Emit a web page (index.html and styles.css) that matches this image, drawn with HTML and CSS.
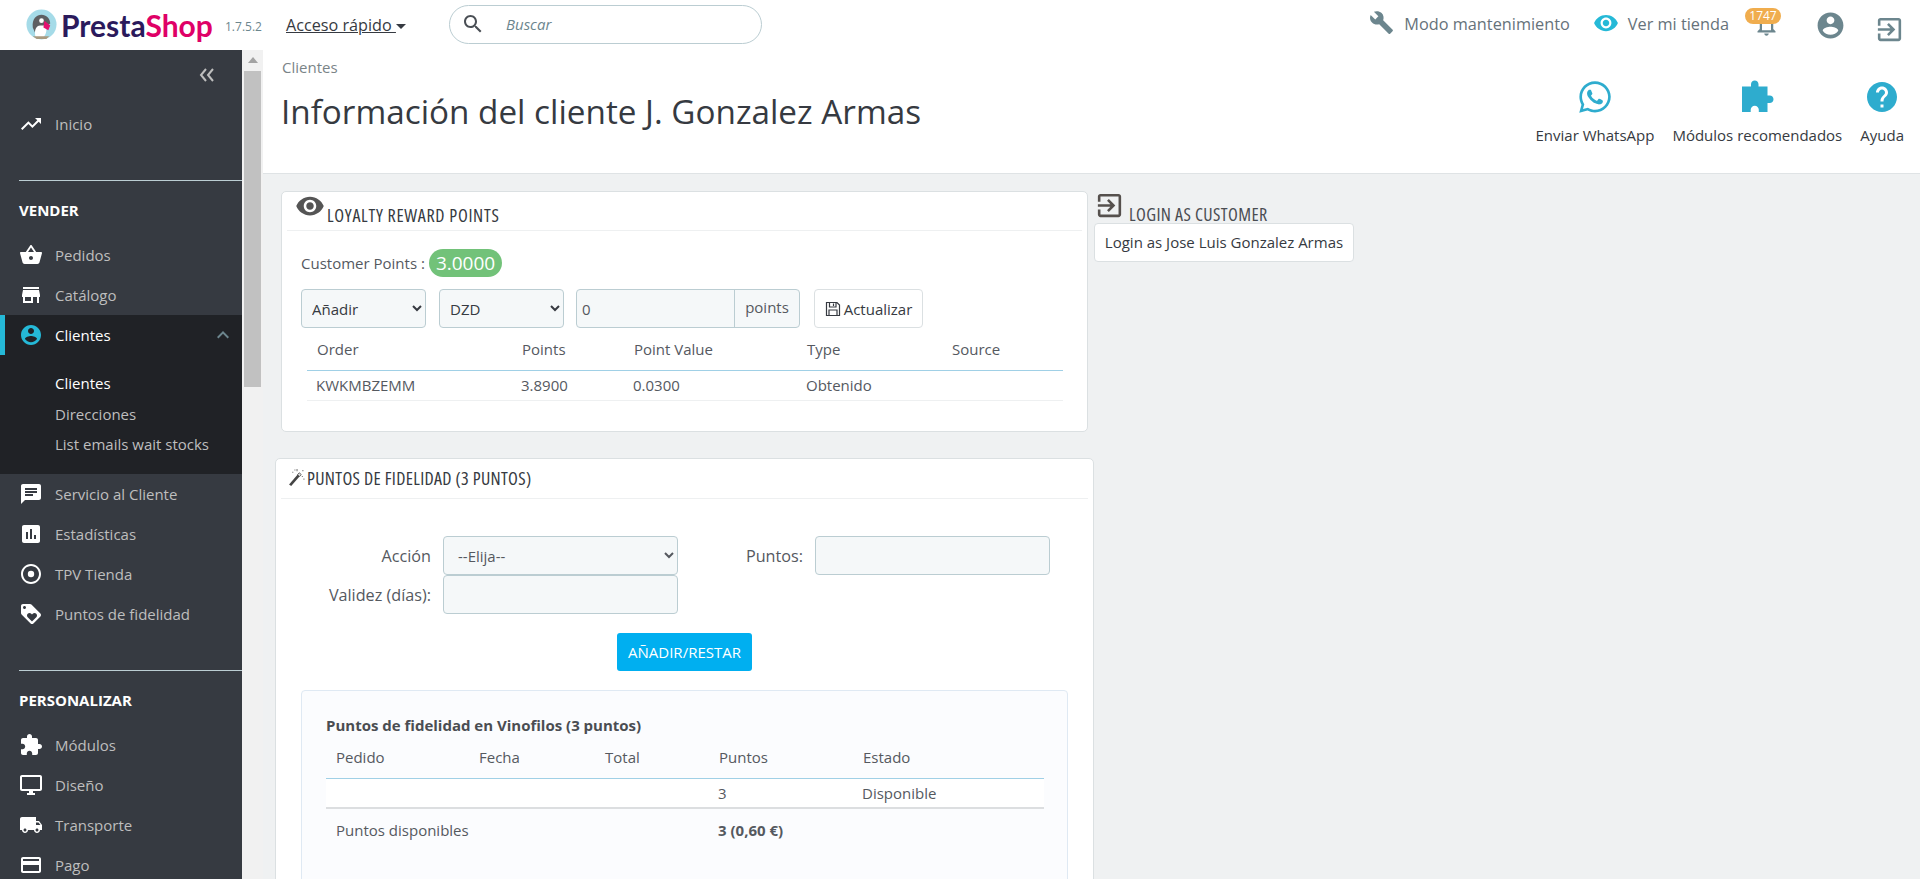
FILE: index.html
```html
<!DOCTYPE html>
<html lang="es">
<head>
<meta charset="utf-8">
<title>Información del cliente</title>
<link rel="stylesheet" href="styles.css">
</head>
<body>
<header class="topbar">
  <div class="logo">
    <svg class="logo-mark" viewBox="0 0 32 32"><circle cx="16" cy="16" r="15.5" fill="#a5dbe8"/><path d="M7 19C6 10 11 6 16 6s9 4 9 9l-3 2-3 9H10z" fill="#5d5f62"/><path d="M10 29c-2-6 0-13 6-12l4 0c2 4 1 9-2 12z" fill="#fff"/><path d="M19 12l6 5-2 5-5-3z" fill="#e5106f"/><circle cx="16" cy="12" r="2.4" fill="#fff"/><path d="M7 28h17l-3 3H11z" fill="#a89a80"/></svg>
    <span class="logo-text"><span class="logo-a">Presta</span><span class="logo-b">Shop</span></span>
  </div>
  <span class="version">1.7.5.2</span>
  <a class="quick">Acceso rápido <span class="caret"></span></a>
  <div class="search">
    <svg class="ico-search" viewBox="0 0 24 24"><path d="M15.5 14h-.79l-.28-.27C15.41 12.59 16 11.11 16 9.5 16 5.91 13.09 3 9.5 3S3 5.91 3 9.5 5.91 16 9.5 16c1.61 0 3.09-.59 4.23-1.57l.27.28v.79l5 4.99L20.49 19l-4.99-5zm-6 0C7.01 14 5 11.99 5 9.5S7.01 5 9.5 5 14 7.01 14 9.5 11.99 14 9.5 14z"/></svg>
    <span class="search-ph">Buscar</span>
  </div>
  <div class="top-right">
    <a class="top-link"><svg class="ico-wrench" viewBox="0 0 24 24"><path d="M22.7 19l-9.1-9.1c.9-2.3.4-5-1.5-6.9-2-2-5-2.4-7.4-1.3L9 6 6 9 1.6 4.7C.4 7.1.9 10.1 2.9 12.1c1.9 1.9 4.6 2.4 6.9 1.5l9.1 9.1c.4.4 1 .4 1.4 0l2.3-2.3c.5-.4.5-1.1.1-1.4z"/></svg>Modo mantenimiento</a>
    <a class="top-link shop"><svg class="ico-eye" viewBox="0 0 24 24"><path d="M12 4.5C7 4.5 2.73 7.61 1 12c1.73 4.39 6 7.5 11 7.5s9.27-3.11 11-7.5c-1.73-4.39-6-7.5-11-7.5zM12 17c-2.76 0-5-2.24-5-5s2.24-5 5-5 5 2.24 5 5-2.24 5-5 5zm0-8c-1.66 0-3 1.34-3 3s1.34 3 3 3 3-1.34 3-3-1.34-3-3-3z"/></svg>Ver mi tienda</a>
    <div class="notif">
      <svg class="ico-bell" viewBox="0 0 24 24"><path d="M12 22c1.1 0 2-.9 2-2h-4c0 1.1.9 2 2 2zm6-6v-5c0-3.07-1.63-5.64-4.5-6.32V4c0-.83-.67-1.5-1.5-1.5s-1.5.67-1.5 1.5v.68C7.64 5.36 6 7.92 6 11v5l-2 2v1h16v-1l-2-2zm-2 1H8v-6c0-2.48 1.51-4.5 4-4.5s4 2.02 4 4.5v6z"/></svg>
      <span class="badge">1747</span>
    </div>
    <svg class="ico-user" viewBox="0 0 24 24"><path d="M12 2C6.48 2 2 6.48 2 12s4.48 10 10 10 10-4.48 10-10S17.52 2 12 2zm0 3c1.66 0 3 1.34 3 3s-1.34 3-3 3-3-1.34-3-3 1.34-3 3-3zm0 14.2c-2.5 0-4.71-1.28-6-3.22.03-1.99 4-3.08 6-3.08 1.99 0 5.97 1.09 6 3.08-1.29 1.94-3.5 3.22-6 3.22z"/></svg>
    <svg class="ico-exit" viewBox="0 0 24 24"><path d="M10.09 15.59L11.5 17l5-5-5-5-1.41 1.41L12.67 11H3v2h9.67l-2.58 2.59zM19 3H5c-1.11 0-2 .9-2 2v4h2V5h14v14H5v-4H3v4c0 1.1.89 2 2 2h14c1.1 0 2-.9 2-2V5c0-1.1-.9-2-2-2z"/></svg>
  </div>
</header>

<div class="layout">
  <nav class="sidebar">
    <div class="collapse"><svg viewBox="0 0 16 14"><path d="M7 1L2 7l5 6M14 1L9 7l5 6"/></svg></div>
    <a class="nav-item"><svg viewBox="0 0 24 24"><path d="M16 6l2.29 2.29-4.88 4.88-4-4L2 16.59 3.41 18l6-6 4 4 6.3-6.29L22 12V6z"/></svg>Inicio</a>
    <hr class="nav-rule">
    <div class="nav-title">VENDER</div>
    <a class="nav-item"><svg viewBox="0 0 24 24"><path d="M17.21 9l-4.38-6.56c-.19-.28-.51-.42-.83-.42-.32 0-.64.14-.83.43L6.79 9H2c-.55 0-1 .45-1 1 0 .09.01.18.04.27l2.54 9.27c.23.84 1 1.46 1.92 1.46h13c.92 0 1.69-.62 1.93-1.46l2.54-9.27L23 10c0-.55-.45-1-1-1h-4.79zM9 9l3-4.4L15 9H9zm3 8c-1.1 0-2-.9-2-2s.9-2 2-2 2 .9 2 2-.9 2-2 2z"/></svg>Pedidos</a>
    <a class="nav-item"><svg viewBox="0 0 24 24"><path d="M20 4H4v2h16V4zm1 10v-2l-1-5H4l-1 5v2h1v6h10v-6h4v6h2v-6h1zm-9 4H6v-4h6v4z"/></svg>Catálogo</a>
    <div class="nav-open">
      <a class="nav-item active"><svg viewBox="0 0 24 24"><path d="M12 2C6.48 2 2 6.48 2 12s4.48 10 10 10 10-4.48 10-10S17.52 2 12 2zm0 3c1.66 0 3 1.34 3 3s-1.34 3-3 3-3-1.34-3-3 1.34-3 3-3zm0 14.2c-2.5 0-4.71-1.28-6-3.22.03-1.99 4-3.08 6-3.08 1.99 0 5.97 1.09 6 3.08-1.29 1.94-3.5 3.22-6 3.22z"/></svg>Clientes<svg class="chev" viewBox="0 0 24 24"><path d="M12 8l-6 6 1.41 1.41L12 10.83l4.59 4.58L18 14z"/></svg></a>
      <ul class="sub">
        <li class="sub-on">Clientes</li>
        <li>Direcciones</li>
        <li>List emails wait stocks</li>
      </ul>
    </div>
    <a class="nav-item"><svg viewBox="0 0 24 24"><path d="M20 2H4c-1.1 0-1.99.9-1.99 2L2 22l4-4h14c1.1 0 2-.9 2-2V4c0-1.1-.9-2-2-2zM6 9h12v2H6V9zm8 5H6v-2h8v2zm4-6H6V6h12v2z"/></svg>Servicio al Cliente</a>
    <a class="nav-item"><svg viewBox="0 0 24 24"><path d="M19 3H5c-1.1 0-2 .9-2 2v14c0 1.1.9 2 2 2h14c1.1 0 2-.9 2-2V5c0-1.1-.9-2-2-2zM9 17H7v-7h2v7zm4 0h-2V7h2v10zm4 0h-2v-4h2v4z"/></svg>Estadísticas</a>
    <a class="nav-item"><svg viewBox="0 0 24 24"><path d="M12 2C6.48 2 2 6.48 2 12s4.48 10 10 10 10-4.48 10-10S17.52 2 12 2zm0 18c-4.42 0-8-3.58-8-8s3.58-8 8-8 8 3.58 8 8-3.58 8-8 8z"/><circle cx="12" cy="12" r="3.2"/></svg>TPV Tienda</a>
    <a class="nav-item"><svg viewBox="0 0 24 24"><path d="M21.41 11.58l-9-9C12.05 2.22 11.55 2 11 2H4c-1.1 0-2 .9-2 2v7c0 .55.22 1.05.59 1.42l9 9c.36.36.86.58 1.41.58s1.05-.22 1.41-.59l7-7c.37-.36.59-.86.59-1.41s-.23-1.06-.59-1.42zM5.5 7C4.67 7 4 6.33 4 5.5S4.67 4 5.5 4 7 4.67 7 5.5 6.33 7 5.5 7zm11.77 8.27L13 19.54l-4.27-4.27C8.28 14.81 8 14.19 8 13.5c0-1.38 1.12-2.5 2.5-2.5.69 0 1.32.28 1.77.74l.73.72.73-.73c.45-.45 1.08-.73 1.77-.73 1.38 0 2.5 1.12 2.5 2.5 0 .69-.28 1.32-.73 1.77z"/></svg>Puntos de fidelidad</a>
    <hr class="nav-rule">
    <div class="nav-title">PERSONALIZAR</div>
    <a class="nav-item"><svg viewBox="0 0 24 24"><path d="M20.5 11H19V7c0-1.1-.9-2-2-2h-4V3.5C13 2.12 11.88 1 10.5 1S8 2.12 8 3.5V5H4c-1.1 0-1.99.9-1.99 2v3.8H3.5c1.49 0 2.7 1.21 2.7 2.7s-1.21 2.7-2.7 2.7H2V20c0 1.1.9 2 2 2h3.8v-1.5c0-1.49 1.21-2.7 2.7-2.7 1.49 0 2.7 1.21 2.7 2.7V22H17c1.1 0 2-.9 2-2v-4h1.5c1.38 0 2.5-1.12 2.5-2.5S21.88 11 20.5 11z"/></svg>Módulos</a>
    <a class="nav-item"><svg viewBox="0 0 24 24"><path d="M21 2H3c-1.1 0-2 .9-2 2v12c0 1.1.9 2 2 2h7v2H8v2h8v-2h-2v-2h7c1.1 0 2-.9 2-2V4c0-1.1-.9-2-2-2zm0 14H3V4h18v12z"/></svg>Diseño</a>
    <a class="nav-item"><svg viewBox="0 0 24 24"><path d="M20 8h-3V4H3c-1.1 0-2 .9-2 2v11h2c0 1.66 1.34 3 3 3s3-1.34 3-3h6c0 1.66 1.34 3 3 3s3-1.34 3-3h2v-5l-3-4zM6 18.5c-.83 0-1.5-.67-1.5-1.5s.67-1.5 1.5-1.5 1.5.67 1.5 1.5-.67 1.5-1.5 1.5zm13.5-9l1.96 2.5H17V9.5h2.5zm-1.5 9c-.83 0-1.5-.67-1.5-1.5s.67-1.5 1.5-1.5 1.5.67 1.5 1.5-.67 1.5-1.5 1.5z"/></svg>Transporte</a>
    <a class="nav-item"><svg viewBox="0 0 24 24"><path d="M20 4H4c-1.11 0-1.99.89-1.99 2L2 18c0 1.11.89 2 2 2h16c1.11 0 2-.89 2-2V6c0-1.11-.89-2-2-2zm0 14H4v-6h16v6zm0-10H4V6h16v2z"/></svg>Pago</a>
  </nav>
  <div class="scroll-strip"><span class="scroll-up"></span><span class="scroll-thumb"></span></div>

  <main class="content">
    <section class="page-head">
      <div class="page-titles">
        <div class="crumb">Clientes</div>
        <h1 class="title">Información del cliente J. Gonzalez Armas</h1>
      </div>
      <div class="toolbar">
        <a class="tool">
          <svg class="tool-ico wa" viewBox="0 0 448 512"><path d="M380.9 97.1C339 55.1 283.2 32 223.9 32c-122.4 0-222 99.6-222 222 0 39.1 10.2 77.3 29.6 111L0 480l117.7-30.9c32.4 17.7 68.9 27 106.1 27h.1c122.3 0 224.1-99.6 224.1-222 0-59.3-25.2-115-67.1-157zm-157 341.6c-33.2 0-65.7-8.9-94-25.7l-6.7-4-69.8 18.3L72 359.2l-4.4-7c-18.5-29.4-28.2-63.3-28.2-98.2 0-101.7 82.8-184.5 184.6-184.5 49.3 0 95.6 19.2 130.4 54.1 34.8 34.9 56.2 81.2 56.1 130.5 0 101.8-84.9 184.6-186.6 184.6zm101.2-138.2c-5.5-2.8-32.8-16.2-37.9-18-5.1-1.9-8.8-2.8-12.5 2.8-3.7 5.6-14.3 18-17.6 21.8-3.2 3.7-6.5 4.2-12 1.4-32.6-16.3-54-29.1-75.5-66-5.7-9.8 5.7-9.1 16.3-30.3 1.8-3.7.9-6.9-.5-9.7-1.4-2.8-12.5-30.1-17.1-41.2-4.5-10.8-9.1-9.3-12.5-9.5-3.2-.2-6.9-.2-10.6-.2-3.7 0-9.7 1.4-14.8 6.9-5.1 5.6-19.4 19-19.4 46.3 0 27.3 19.9 53.7 22.6 57.4 2.8 3.7 39.1 59.7 94.8 83.8 35.2 15.2 49 16.5 66.6 13.9 10.7-1.6 32.8-13.4 37.4-26.4 4.6-13 4.6-24.1 3.2-26.4-1.3-2.5-5-3.9-10.5-6.6z"/></svg>
          Enviar WhatsApp
        </a>
        <a class="tool">
          <svg class="tool-ico" viewBox="0 0 24 24"><path d="M20.5 11H19V5h-6V3.5C13 2.12 11.88 1 10.5 1S8 2.12 8 3.5V5H2v17h5.8v-1.5c0-1.49 1.21-2.7 2.7-2.7 1.49 0 2.7 1.21 2.7 2.7V22H19v-6h1.5c1.38 0 2.5-1.12 2.5-2.5S21.88 11 20.5 11z"/></svg>
          Módulos recomendados
        </a>
        <a class="tool">
          <svg class="tool-ico" viewBox="0 0 24 24"><path d="M12 2C6.48 2 2 6.48 2 12s4.48 10 10 10 10-4.48 10-10S17.52 2 12 2zm1 17h-2v-2h2v2zm2.07-7.75l-.9.92C13.45 12.9 13 13.5 13 15h-2v-.5c0-1.1.45-2.1 1.17-2.83l1.24-1.26c.37-.36.59-.86.59-1.41 0-1.1-.9-2-2-2s-2 .9-2 2H8c0-2.21 1.79-4 4-4s4 1.79 4 4c0 .88-.36 1.68-.93 2.25z"/></svg>
          Ayuda
        </a>
      </div>
    </section>

    <div class="columns">
      <div class="col-main">
        <section class="card card-loyalty">
          <h3 class="card-head head-loyalty">
            <svg class="head-eye" viewBox="0 0 24 24"><path d="M12 4.5C7 4.5 2.73 7.61 1 12c1.73 4.39 6 7.5 11 7.5s9.27-3.11 11-7.5c-1.73-4.39-6-7.5-11-7.5zM12 17c-2.76 0-5-2.24-5-5s2.24-5 5-5 5 2.24 5 5-2.24 5-5 5zm0-8c-1.66 0-3 1.34-3 3s1.34 3 3 3 3-1.34 3-3-1.34-3-3-3z"/></svg>
            <span>LOYALTY REWARD POINTS</span>
          </h3>
          <div class="loyalty-body">
            <div class="points-line">Customer Points :<span class="pill">3.0000</span></div>
            <div class="points-form">
              <select class="field sel-small"><option>Añadir</option></select>
              <select class="field sel-small"><option>DZD</option></select>
              <div class="input-group"><span class="ig-value">0</span><span class="ig-addon">points</span></div>
              <button class="btn-save"><svg viewBox="0 0 16 16"><path d="M1.5 1.5h10.5l2.5 2.5v10.5h-13zM4.5 1.5v4.5h6.5v-4.5M4 14.5v-5.5h8v5.5M8.5 2.5v2.5" /></svg>Actualizar</button>
            </div>
            <table class="tbl tbl-loyalty">
              <thead><tr><th class="c1">Order</th><th class="c2">Points</th><th class="c3">Point Value</th><th class="c4">Type</th><th class="c5">Source</th></tr></thead>
              <tbody><tr><td>KWKMBZEMM</td><td>3.8900</td><td>0.0300</td><td>Obtenido</td><td></td></tr></tbody>
            </table>
          </div>
        </section>

        <section class="card card-fidelity">
          <h3 class="card-head head-fidelity">
            <svg class="head-wand" viewBox="0 0 16 16"><path d="M1 14.5L10.5 3.5l2 1.7L3 16z" fill="#444"/><path d="M10.5 3.5l2 1.7-1.5 1.8-2-1.7z" fill="#ddd" stroke="#444" stroke-width=".6"/><path d="M6 1h1M8.5 0v2M4 3h1M14 1v1M13 7h1M15 9v1" stroke="#777" stroke-width="1"/></svg>
            <span>PUNTOS DE FIDELIDAD (3 PUNTOS)</span>
          </h3>
          <div class="fidelity-body">
            <div class="fid-form">
              <label class="lab">Acción</label>
              <select class="field sel-wide"><option>--Elija--</option></select>
              <label class="lab">Puntos:</label>
              <div class="field"></div>
              <label class="lab">Validez (días):</label>
              <div class="field"></div>
            </div>
            <div class="fid-action"><button class="btn-primary">AÑADIR/RESTAR</button></div>
            <div class="inner-box">
              <h4 class="inner-title">Puntos de fidelidad en Vinofilos (3 puntos)</h4>
              <table class="tbl tbl-fid">
                <thead><tr><th class="d1">Pedido</th><th class="d2">Fecha</th><th class="d3">Total</th><th class="d4">Puntos</th><th class="d5">Estado</th></tr></thead>
                <tbody>
                  <tr class="row-light"><td></td><td></td><td></td><td>3</td><td>Disponible</td></tr>
                </tbody>
                <tfoot>
                  <tr><td colspan="3">Puntos disponibles</td><td colspan="2" class="strong">3 (0,60 €)</td></tr>
                </tfoot>
              </table>
            </div>
          </div>
        </section>
      </div>

      <aside class="col-side">
        <h3 class="side-head">
          <svg class="side-exit" viewBox="0 0 24 24"><path d="M10.09 15.59L11.5 17l5-5-5-5-1.41 1.41L12.67 11H3v2h9.67l-2.58 2.59zM19 3H5c-1.11 0-2 .9-2 2v4h2V5h14v14H5v-4H3v4c0 1.1.89 2 2 2h14c1.1 0 2-.9 2-2V5c0-1.1-.9-2-2-2z"/></svg>
          <span>LOGIN AS CUSTOMER</span>
        </h3>
        <a class="login-btn">Login as Jose Luis Gonzalez Armas</a>
      </aside>
    </div>
  </main>
</div>
</body>
</html>
```
FILE: styles.css
```css
* { box-sizing: border-box; }
html, body { margin: 0; height: 100%; overflow: hidden; }
body {
  font-family: "Open Sans", "Liberation Sans", sans-serif;
  font-size: 15px;
  color: #363a41;
  background: #eff1f2;
  display: flex;
  flex-direction: column;
}

/* top bar */
.topbar { height: 50px; flex: none; background: #fff; display: flex; align-items: center; padding-left: 26px; }
.logo { display: flex; align-items: center; width: 199px; flex: none; }
.logo-mark { width: 31px; height: 31px; flex: none; margin-top: -1px; }
.logo-text { font-family: Lato, "Open Sans", sans-serif; font-weight: 700; font-size: 30px; line-height: 34px; margin-left: 4px; }
.logo-a { color: #2b1a5c; }
.logo-b { color: #df0067; }
.version { font-size: 12px; color: #6c868e; width: 61px; flex: none; margin-top: 3px; }
.quick { color: #363a41; text-decoration: underline; font-size: 16.2px; width: 163px; flex: none; white-space: nowrap; }
.caret { display: inline-block; border: 5px solid transparent; border-top-color: #363a41; border-bottom: 0; vertical-align: 2px; }
.search { width: 313px; height: 39px; border: 1px solid #bbcdd2; border-radius: 20px; display: flex; align-items: center; padding-left: 11px; margin-top: -2px; flex: none; }
.ico-search { width: 24px; height: 24px; fill: #4a4f55; flex: none; }
.search-ph { font-style: italic; color: #6c868e; margin-left: 21px; }
.top-right { margin-left: auto; display: flex; align-items: center; height: 100%; padding-right: 15px; }
.top-link { display: flex; align-items: center; color: #66727a; font-size: 16.3px; margin-top: -2px; white-space: nowrap; }
.ico-wrench { width: 25px; height: 25px; fill: #6c868e; margin: -4px 10px 0 0; }
.ico-eye { width: 26px; height: 26px; fill: #25b9d7; margin: -2px 9px 0 0; }
.shop { margin-left: 23px; }
.notif { position: relative; width: 36px; height: 50px; margin-left: 16px; }
.ico-bell { position: absolute; left: 8px; top: 11px; width: 27px; height: 27px; fill: #6c868e; }
.badge { position: absolute; left: 0; top: 8px; width: 36px; height: 16px; border-radius: 8px; background: #f0ad4e; color: #fff; font-size: 12px; line-height: 16px; text-align: center; }
.ico-user { width: 31px; height: 31px; fill: #6c868e; margin-left: 34px; flex: none; }
.ico-exit { width: 31px; height: 31px; fill: #6c868e; margin-left: 28px; margin-top: 8px; flex: none; }

/* layout */
.layout { flex: 1; min-height: 0; display: flex; overflow: hidden; }
.sidebar { width: 242px; flex: none; background: #363a41; overflow: hidden; color: #bebebe; }
.collapse { height: 54px; display: flex; justify-content: flex-end; padding: 18px 27px 0 0; }
.collapse svg { width: 16px; height: 14px; fill: none; stroke: #bebebe; stroke-width: 2; }
.nav-item { height: 40px; display: flex; align-items: center; padding-left: 19px; color: #bebebe; }
.nav-item > svg { width: 24px; height: 24px; fill: #fff; margin-right: 12px; flex: none; }
.nav-rule { border: 0; border-top: 1px solid #bbcdd2; height: 1px; margin: 36px 0 0 19px; }
.nav-title { height: 54px; line-height: 58px; padding-left: 19px; color: #fff; font-weight: 700; }
.nav-open { background: #202226; height: 159px; }
.nav-item.active { color: #fff; border-left: 5px solid #25b9d7; padding-left: 14px; }
.nav-item.active > svg { fill: #25b9d7; }
.nav-item.active > svg.chev { fill: #6c868e; margin: 0 7px 0 auto; }
.sub { list-style: none; margin: 0; padding: 13px 0 0 55px; }
.sub li { height: 30.5px; line-height: 30px; color: #bebebe; }
.sub .sub-on { color: #fff; }
.scroll-strip { width: 21px; flex: none; background: #f1f1f1; padding: 0 2px; display: flex; flex-direction: column; }
.scroll-up { height: 21px; flex: none; position: relative; }
.scroll-up::before { content: ""; position: absolute; left: 4px; top: 7px; border: 5px solid transparent; border-top: 0; border-bottom: 6px solid #a3a3a3; }
.scroll-thumb { width: 17px; height: 316px; background: #c1c1c1; flex: none; }

/* content */
.content { flex: 1; min-width: 0; overflow: hidden; }
.page-head { height: 124px; background: #fff; border-bottom: 1px solid #dfe3e5; display: flex; justify-content: space-between; padding: 0 16px 0 18px; }
.crumb { color: #7a8488; line-height: 20px; margin: 7px 0 0 1px; }
.title { font-size: 33.25px; font-weight: 400; line-height: 44px; margin: 12px 0 0; color: #363a41; }
.toolbar { display: flex; gap: 18px; padding-top: 29px; }
.tool { display: flex; flex-direction: column; align-items: center; line-height: 20px; color: #363a41; white-space: nowrap; }
.tool-ico { width: 36px; height: 36px; fill: #2eacce; margin-bottom: 10px; }
.wa { width: 32px; height: 36px; }

.columns { display: flex; align-items: flex-start; }
.col-main { width: 831px; flex: none; padding-left: 12px; }
.card { background: #fff; border: 1px solid #dbe0e2; border-radius: 5px; }
.card-loyalty { margin: 17px 6px 0 6px; height: 241px; }
.card-fidelity { margin-top: 26px; }
.card-head { margin: 0 5px; font-family: "Open Sans", sans-serif; font-stretch: 80%; font-weight: 400; font-size: 18px; color: #363a41; border-bottom: 1px solid #eef0f1; }
.head-loyalty { height: 39px; position: relative; padding: 13px 0 0 40px; line-height: 20px; font-stretch: 83%; letter-spacing: .7px; white-space: nowrap; }
.head-eye { position: absolute; left: 8px; top: -1px; width: 30px; height: 30px; fill: #555; }
.head-fidelity { height: 40px; display: flex; align-items: center; padding: 0 0 2px 7px; letter-spacing: .33px; white-space: nowrap; }
.head-wand { width: 17px; height: 17px; margin-right: 2px; flex: none; }
.loyalty-body { padding: 18px 19px 0 19px; }
.points-line { display: flex; align-items: center; height: 28px; color: #55595f; white-space: nowrap; }
.pill { background: #72c279; color: #fff; border-radius: 14px; height: 28px; line-height: 28px; padding: 0 7px; font-size: 19px; margin-left: 4px; }
.points-form { display: flex; margin-top: 12px; height: 39px; }
.field { display: block; height: 39px; background: #f5f8f9; border: 1px solid #bbcdd2; border-radius: 4px; font-family: inherit; font-size: 15px; color: #363a41; padding: 0 6px; width: 235px; }
.sel-wide { padding: 0 10px; color: #55595f; }
.sel-small { width: 125px; margin-right: 13px; }
.sel-small + .sel-small { margin-right: 12px; }
.input-group { width: 224px; display: flex; border: 1px solid #bbcdd2; border-radius: 4px; background: #f5f8f9; margin-right: 14px; }
.ig-value { flex: 1; padding-left: 5px; line-height: 38px; color: #55595f; }
.ig-addon { width: 65px; border-left: 1px solid #bbcdd2; text-align: center; line-height: 34px; color: #55595f; }
.btn-save { width: 109px; height: 39px; background: #fff; border: 1px solid #dbe0e2; border-radius: 4px; display: flex; align-items: center; justify-content: center; font-family: inherit; font-size: 15px; color: #363a41; padding: 0; }
.btn-save svg { width: 16px; height: 16px; fill: none; stroke: #363a41; stroke-width: 1.2; margin-right: 3px; }
.tbl { border-collapse: collapse; table-layout: fixed; color: #55595f; }
.tbl th { font-weight: 400; text-align: left; padding: 0 0 0 10px; border-bottom: 1px solid #a0d0e6; }
.tbl td { padding: 0 0 0 9px; }
.tbl-loyalty { width: 756px; margin-left: 6px; }
.tbl-loyalty th { height: 42px; }
.tbl-loyalty td { height: 30px; border-bottom: 1px solid #eef0f1; }
.c1 { width: 205px; } .c2 { width: 112px; } .c3 { width: 173px; } .c4 { width: 145px; } .c5 { width: 121px; }

.fidelity-body { padding: 37px 25px 0 25px; }
.fid-form { display: grid; grid-template-columns: 142px 235px 137px 235px; grid-auto-rows: 39px; align-items: center; }
.lab { text-align: right; padding-right: 12px; color: #55595f; font-size: 16.2px; white-space: nowrap; }
.fid-action { display: flex; justify-content: center; margin-top: 19px; }
.btn-primary { width: 135px; height: 38px; background: #00aff0; color: #fff; border: 0; border-radius: 3px; font-family: inherit; font-size: 15px; padding: 0; }
.inner-box { margin-top: 19px; background: #fbfcfe; border: 1px solid #dfe9f3; border-radius: 4px; padding: 24px 24px 90px 24px; }
.inner-title { margin: 0 0 1px; font-size: 15px; font-weight: 700; line-height: 20px; color: #4a4d52; }
.tbl-fid { width: 718px; }
.tbl-fid th { height: 42px; }
.tbl-fid .row-light td { height: 30px; background: #fff; border-bottom: 2px solid #dcdee0; }
.tbl-fid tfoot td { height: 42px; }
.tbl-fid tfoot td:first-child { padding-left: 10px; }
.strong { font-weight: 700; }
.d1 { width: 143px; } .d2 { width: 126px; } .d3 { width: 114px; } .d4 { width: 144px; } .d5 { width: 191px; }

.col-side { padding: 17px 0 0 0; width: 262px; flex: none; }
.side-head { margin: 0; height: 32px; font-family: "Open Sans", sans-serif; font-stretch: 80%; font-weight: 400; font-size: 18px; letter-spacing: .4px; color: #4a4d52; position: relative; padding: 11px 0 0 35px; line-height: 24px; white-space: nowrap; }
.side-exit { position: absolute; left: 0; top: -1px; width: 31px; height: 31px; fill: #55504d; }
.login-btn { display: block; width: 260px; height: 39px; line-height: 36px; text-align: center; background: #fff; border: 1px solid #dbe0e2; border-radius: 4px; color: #363a41; }
```
